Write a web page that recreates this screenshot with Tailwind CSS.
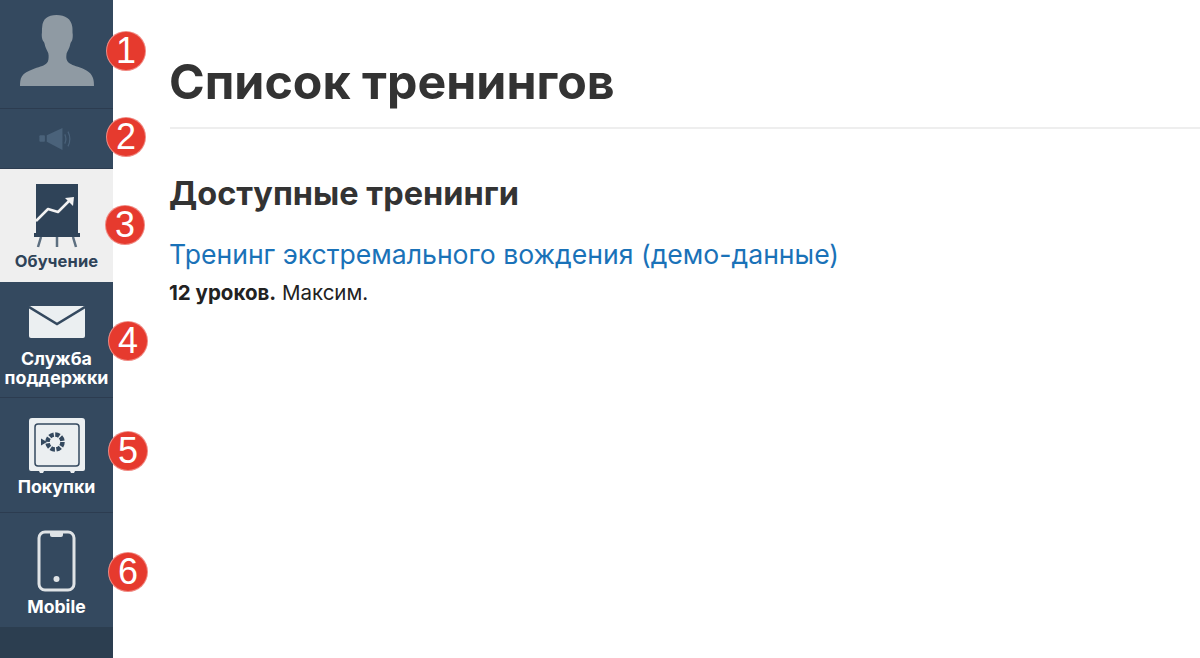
<!DOCTYPE html>
<html lang="ru"><head><meta charset="utf-8"><script src="https://cdn.jsdelivr.net/npm/@tailwindcss/browser@4"></script></head>
<body class="bg-white font-['Inter','Noto_Sans',sans-serif]">
<div class="relative flex h-[658px] w-[1200px] overflow-hidden">
  <nav class="flex h-full w-[113px] shrink-0 flex-col bg-[#2c3e50] font-bold text-white">
    <div class="flex h-[108px] items-start justify-center bg-[#34495f] pt-[15px]">
      <svg class="h-[71px] w-[74px]" viewBox="0 0 75 72"><path fill="#8f9aa3" d="M37 0c9 0 15 4 16 12 .5 3 0 5 .5 8 0 4-.5 6-1.500 7-1 1-1 3-2 6-1 3-3 5-3 8-.5 4 1 7 5 9 3 2 10 3 15 6 4 2 6 5 7 8 1 3 1 6 1 8H0c0-3 0-7 2-10 2-3 6-5 11-7 5-2 11-3 14-6 2-2 2-5 2-8 0-3-2-5-3-8-1-3-1-5-2-6-1-1-2-3-2-7 .5-3 0-5 .5-8C23 4 28 0 37 0Z"/></svg>
    </div>
    <div class="flex h-[61px] items-center justify-center border-y border-[#2c3c50] bg-[#34495f] pr-[2px]">
      <svg class="h-[24px] w-[36px]" viewBox="0 0 36 26"><g fill="#4a627a"><rect x="0" y="9" width="6" height="7" rx="1"/><path d="M8 9 25 1v24L8 16Z"/></g><path fill="none" stroke="#4a627a" stroke-width="1.300" d="M27.500 8c1.500 3 1.500 7 0 10M31 5c2.500 5 2.500 11 0 16"/></svg>
    </div>
    <div class="flex h-[113px] flex-col items-center bg-[#efefef] pt-[14px] text-[#2f4358]">
      <svg class="h-[66px] w-[46px]" viewBox="0 0 46 66"><rect x="2" y="1" width="42" height="49" fill="#2f4358"/><path fill="none" stroke="#f2f2f2" stroke-width="2.500" stroke-linejoin="round" d="M2 38 14 26l10 3 12-12"/><path fill="#f2f2f2" d="m31 15 9-1-1 9Z"/><rect x="0" y="50" width="46" height="4" fill="#2f4358"/><path stroke="#5d6f80" stroke-width="2.500" d="m7 54-3 10M23 54v10M39 54l3 10"/></svg>
      <span class="mt-[3px] text-[16.500px] leading-[18px] tracking-[0.1px]">Обучение</span>
    </div>
    <div class="flex h-[116px] flex-col items-center border-b border-[#2c3c50] bg-[#34495f] pt-[24px]">
      <svg class="h-[32px] w-[56px]" viewBox="0 0 56 32"><rect width="56" height="32" rx="2" fill="#ebeff1"/><path fill="none" stroke="#34495f" stroke-width="2.500" d="M0 1l28 17L56 1"/></svg>
      <span class="mt-[11px] text-center text-[17.800px] leading-[19px]">Служба<br>поддержки</span>
    </div>
    <div class="flex h-[115px] flex-col items-center border-b border-[#2c3c50] bg-[#34495f] pt-[20px]">
      <svg class="h-[55px] w-[56px]" viewBox="0 0 56 55"><path fill="#ebeff1" d="M3 0h50a3 3 0 0 1 3 3v48a2 2 0 0 1-2 2h-8l-1 2h-3l-1-2H15l-1 2h-3l-1-2H2a2 2 0 0 1-2-2V3a3 3 0 0 1 3-3Z"/><rect x="6" y="6" width="44" height="42" rx="3" fill="none" stroke="#34495f" stroke-width="1.500"/><circle cx="26" cy="24" r="7.500" fill="none" stroke="#34495f" stroke-width="4.500" stroke-dasharray="4.400 1.490"/><path fill="#34495f" d="M12 20.500 18 24l-6 3.500Z"/></svg>
      <span class="mt-[5px] text-[17.800px] leading-[18px]">Покупки</span>
    </div>
    <div class="flex h-[114px] flex-col items-center bg-[#34495f] pt-[17px]">
      <svg class="h-[62px] w-[40px]" viewBox="0 0 40 62"><rect x="2" y="2" width="35" height="58" rx="6" fill="none" stroke="#dfe3e6" stroke-width="3"/><path fill="#dfe3e6" d="M13 2h13v3a2 2 0 0 1-2 2h-9a2 2 0 0 1-2-2Z"/><circle cx="19.500" cy="49" r="3" fill="#dfe3e6"/></svg>
      <span class="mt-[6px] text-[17.600px] leading-[18px]">Mobile</span>
    </div>
  </nav>
  <main class="flex-1 pl-[57px] pt-[48px]">
    <div class="border-b-2 border-[#eeeeee] pb-[16px]">
      <h1 class="text-[48.300px] font-bold leading-[63px] text-[#333333] translate-y-[2px] -translate-x-px">Список тренингов</h1>
    </div>
    <h2 class="mt-[45px] text-[32.500px] font-bold leading-[40px] text-[#333333] -translate-x-px">Доступные тренинги</h2>
    <a href="#" class="mt-[22px] block text-[26.600px] leading-[36px] text-[#1a72b8] -translate-x-px">Тренинг экстремального вождения (демо-данные)</a>
    <p class="mt-[6px] text-[20.500px] leading-[30px] text-[#222222] -translate-x-px"><b>12 уроков.</b> Максим.</p>
  </main>
  <span class="absolute left-[106px] top-[31px] flex size-[40px] items-center justify-center rounded-full border border-white/40 bg-[#e63a2e] font-['Liberation_Sans',sans-serif] text-[36px] leading-none text-white">1</span>
  <span class="absolute left-[106px] top-[117px] flex size-[40px] items-center justify-center rounded-full border border-white/40 bg-[#e63a2e] font-['Liberation_Sans',sans-serif] text-[36px] leading-none text-white">2</span>
  <span class="absolute left-[105px] top-[205px] flex size-[40px] items-center justify-center rounded-full border border-white/40 bg-[#e63a2e] font-['Liberation_Sans',sans-serif] text-[36px] leading-none text-white">3</span>
  <span class="absolute left-[108px] top-[321px] flex size-[40px] items-center justify-center rounded-full border border-white/40 bg-[#e63a2e] font-['Liberation_Sans',sans-serif] text-[36px] leading-none text-white">4</span>
  <span class="absolute left-[108px] top-[431px] flex size-[40px] items-center justify-center rounded-full border border-white/40 bg-[#e63a2e] font-['Liberation_Sans',sans-serif] text-[36px] leading-none text-white">5</span>
  <span class="absolute left-[108px] top-[552px] flex size-[40px] items-center justify-center rounded-full border border-white/40 bg-[#e63a2e] font-['Liberation_Sans',sans-serif] text-[36px] leading-none text-white">6</span>
</div>
</body></html>
